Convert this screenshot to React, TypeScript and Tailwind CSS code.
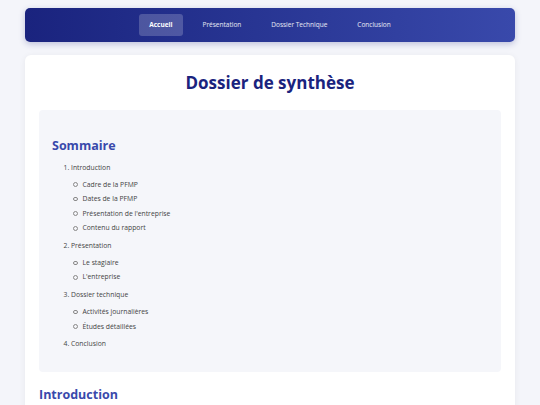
export default function App() {
  const sommaire = [
    {
      title: "Introduction",
      items: ["Cadre de la PFMP", "Dates de la PFMP", "Présentation de l'entreprise", "Contenu du rapport"],
    },
    { title: "Présentation", items: ["Le stagiaire", "L'entreprise"] },
    { title: "Dossier technique", items: ["Activités journalières", "Études détaillées"] },
    { title: "Conclusion", items: [] },
  ];

  const nav = ["Accueil", "Présentation", "Dossier Technique", "Conclusion"];

  return (
    <div className="min-h-screen bg-[#f4f5fa] px-[25px] pt-[8px] font-['Open_Sans',sans-serif] text-[#333]">
      {/* Navigation */}
      <nav className="flex h-[34px] items-center justify-center gap-[10px] rounded-[5px] bg-gradient-to-r from-[#1a237e] to-[#3949ab] shadow-[0_2px_6px_rgba(26,35,126,0.25)]">
        {nav.map((item, i) => (
          <a
            key={item}
            className={
              i === 0
                ? "rounded-[3px] bg-white/20 px-[10px] py-[6px] text-[6.5px] font-bold text-white"
                : "px-[10px] py-[6px] text-[6.5px] text-white/90"
            }
          >
            {item}
          </a>
        ))}
      </nav>

      {/* Main card */}
      <main className="mt-[13px] rounded-[6px] bg-white px-[14px] pt-[14px] pb-[20px] shadow-[0_1px_6px_rgba(0,0,0,0.06)]">
        <h1 className="text-center text-[17px] leading-[28px] font-bold text-[#1a237e]">Dossier de synthèse</h1>

        <section className="mt-[13px] rounded-[4px] bg-[#f5f6fa] px-[13px] pt-[26px] pb-[15px]">
          <h2 className="text-[12.5px] leading-[20px] font-bold text-[#3949ab]">Sommaire</h2>
          <ol className="mt-[6.5px] list-decimal pl-[19px] text-[6.8px] leading-[10px] text-[#444]">
            {sommaire.map((s) => (
              <li key={s.title} className="mb-[7.6px]">
                {s.title}
                {s.items.length > 0 && (
                  <ul className="mt-[7px]">
                    {s.items.map((it) => (
                      <li key={it} className="mb-[4.6px] flex items-center">
                        <span className="ml-[2px] mr-[5px] h-[4.5px] w-[4.5px] rounded-full border-[0.7px] border-[#888]" />
                        {it}
                      </li>
                    ))}
                  </ul>
                )}
              </li>
            ))}
          </ol>
        </section>

        <h2 className="mt-[13px] text-[12.5px] leading-[20px] font-bold text-[#3949ab]">Introduction</h2>
      </main>
    </div>
  );
}
